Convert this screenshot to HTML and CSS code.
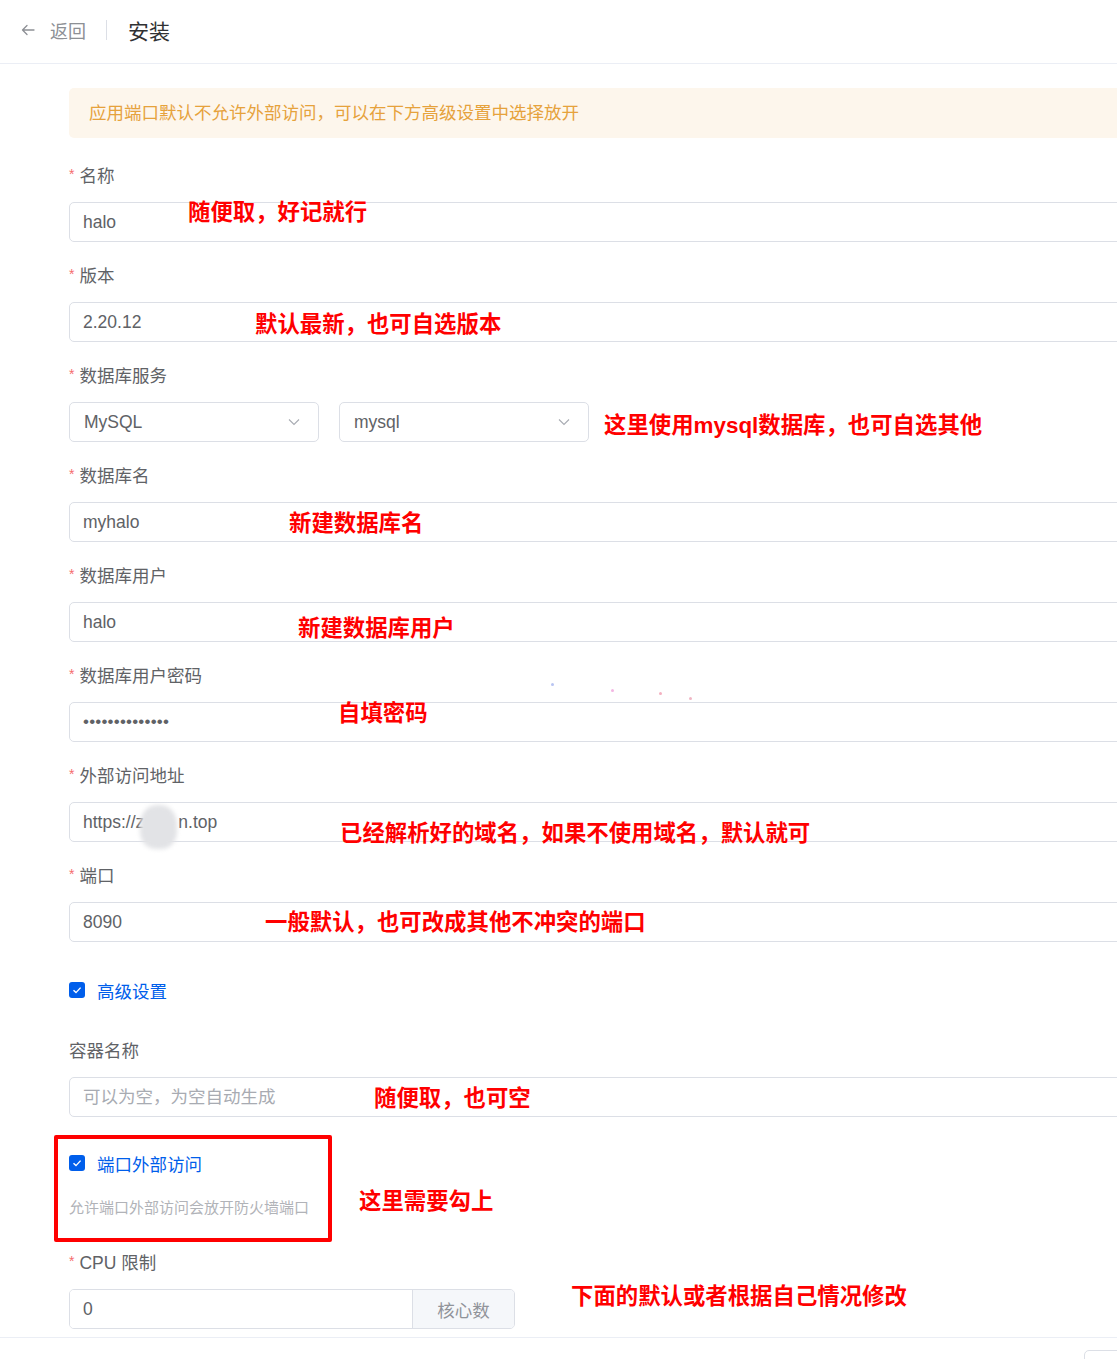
FILE: index.html
```html
<!DOCTYPE html>
<html lang="zh-CN">
<head>
    <meta charset="UTF-8">
    <meta name="viewport" content="width=device-width, initial-scale=1.0">
    <title>安装</title>
    <link rel="stylesheet" href="styles.css">
</head>
<body>

    <header class="page-header">
        <a class="back-link" href="#">
            <svg class="back-icon" viewBox="0 0 16 16" width="16" height="16">
                <path d="M14 8H2.5M7 3.5L2.5 8L7 12.5" fill="none" stroke="#8d9095" stroke-width="1.3" stroke-linecap="round" stroke-linejoin="round"/>
            </svg>
            <span>返回</span>
        </a>
        <span class="header-divider"></span>
        <span class="page-title">安装</span>
    </header>

    <main class="content">
        <div class="alert">应用端口默认不允许外部访问，可以在下方高级设置中选择放开</div>

        <form class="install-form">
            <div class="form-item">
                <label class="form-label required">名称</label>
                <input class="text-input" type="text" value="halo">
                <span class="note note-name">随便取，好记就行</span>
            </div>

            <div class="form-item">
                <label class="form-label required">版本</label>
                <input class="text-input" type="text" value="2.20.12">
                <span class="note note-version">默认最新，也可自选版本</span>
            </div>

            <div class="form-item">
                <label class="form-label required">数据库服务</label>
                <div class="select-row">
                    <div class="select-box">
                        <span>MySQL</span>
                        <svg viewBox="0 0 14 14" width="14" height="14"><path d="M2 4.5L7 9.5L12 4.5" fill="none" stroke="#a8abb2" stroke-width="1.1"/></svg>
                    </div>
                    <div class="select-box">
                        <span>mysql</span>
                        <svg viewBox="0 0 14 14" width="14" height="14"><path d="M2 4.5L7 9.5L12 4.5" fill="none" stroke="#a8abb2" stroke-width="1.1"/></svg>
                    </div>
                </div>
                <span class="note note-db">这里使用mysql数据库，也可自选其他</span>
            </div>

            <div class="form-item">
                <label class="form-label required">数据库名</label>
                <input class="text-input" type="text" value="myhalo">
                <span class="note note-dbname">新建数据库名</span>
            </div>

            <div class="form-item">
                <label class="form-label required">数据库用户</label>
                <input class="text-input" type="text" value="halo">
                <span class="note note-dbuser">新建数据库用户</span>
            </div>

            <div class="form-item">
                <label class="form-label required">数据库用户密码</label>
                <input class="text-input password" type="text" value="••••••••••••••">
                <span class="speck speck-1"></span>
                <span class="speck speck-2"></span>
                <span class="speck speck-3"></span>
                <span class="speck speck-4"></span>
                <span class="note note-pass">自填密码</span>
            </div>

            <div class="form-item">
                <label class="form-label required">外部访问地址</label>
                <div class="url-wrap">
                    <input class="text-input" type="text" value="https://z       n.top">
                    <span class="blur-mask"></span>
                </div>
                <span class="note note-url">已经解析好的域名，如果不使用域名，默认就可</span>
            </div>

            <div class="form-item">
                <label class="form-label required">端口</label>
                <input class="text-input" type="text" value="8090">
                <span class="note note-port">一般默认，也可改成其他不冲突的端口</span>
            </div>

            <div class="check-item advanced">
                <span class="check-box">
                    <svg viewBox="0 0 16 16" width="16" height="16"><path d="M4.5 8.2L7 10.6L11.6 5.6" fill="none" stroke="#fff" stroke-width="1.4"/></svg>
                </span>
                <span class="check-label">高级设置</span>
            </div>

            <div class="form-item">
                <label class="form-label">容器名称</label>
                <input class="text-input" type="text" placeholder="可以为空，为空自动生成">
                <span class="note note-container">随便取，也可空</span>
            </div>

            <div class="port-access">
                <div class="check-item">
                    <span class="check-box">
                        <svg viewBox="0 0 16 16" width="16" height="16"><path d="M4.5 8.2L7 10.6L11.6 5.6" fill="none" stroke="#fff" stroke-width="1.4"/></svg>
                    </span>
                    <span class="check-label">端口外部访问</span>
                </div>
                <p class="help-text">允许端口外部访问会放开防火墙端口</p>
                <span class="red-frame"></span>
                <span class="note note-check">这里需要勾上</span>
            </div>

            <div class="form-item last">
                <label class="form-label required">CPU 限制</label>
                <div class="input-group">
                    <input class="group-input" type="text" value="0">
                    <span class="group-append">核心数</span>
                </div>
                <span class="note note-cpu">下面的默认或者根据自己情况修改</span>
            </div>
        </form>
    </main>

    <footer class="page-footer">
        <button class="footer-btn" type="button"></button>
    </footer>

</body>
</html>
```

FILE: styles.css
```css
/* page base */
html, body {
    margin: 0;
    padding: 0;
    overflow: hidden;
}
body {
    font-family: "Liberation Sans", "Noto Sans CJK SC", sans-serif;
    background: #fff;
    color: #606266;
    width: 1117px;
    height: 1359px;
}

/* top bar */
.page-header {
    height: 64px;
    border-bottom: 1px solid #ebeef5;
    display: flex;
    align-items: center;
    padding-left: 20px;
    box-sizing: border-box;
    padding-bottom: 4px;
}
.back-link {
    display: flex;
    align-items: center;
    gap: 14px;
    color: #8d9095;
    font-size: 18px;
    text-decoration: none;
}
.header-divider {
    width: 1px;
    height: 20px;
    background: #dcdfe6;
    margin: 0 21px 0 20px;
}
.page-title {
    font-size: 21px;
    color: #303133;
}

/* body content */
.content {
    padding: 24px 0 0 69px;
    width: 1100px;
}
.alert {
    height: 50px;
    line-height: 50px;
    padding-left: 20px;
    background: #fdf6ec;
    color: #e6a23c;
    font-size: 17.5px;
    border-radius: 5px;
}
.install-form {
    margin-top: 25px;
    display: flex;
    flex-direction: column;
}
.form-item {
    position: relative;
    margin-bottom: 21px;
}
.form-item.last {
    margin-bottom: 0;
}
.form-label {
    display: block;
    height: 26px;
    line-height: 26px;
    font-size: 17.5px;
    color: #606266;
    margin-bottom: 13px;
}
.form-label.required::before {
    content: "*";
    color: #f56c6c;
    font-size: 14px;
    margin-right: 5px;
    position: relative;
    top: -3px;
}
.text-input {
    display: block;
    width: 100%;
    height: 40px;
    box-sizing: border-box;
    border: 1px solid #dcdfe6;
    border-radius: 5px;
    padding: 0 13px;
    font-family: inherit;
    font-size: 17.5px;
    color: #606266;
    outline: none;
    background: #fff;
}
.text-input::placeholder {
    color: #a8abb2;
}
.text-input.password {
    font-size: 17px;
    letter-spacing: 0.2px;
}

/* selects */
.select-row {
    display: flex;
    gap: 20px;
}
.select-box {
    width: 250px;
    height: 40px;
    box-sizing: border-box;
    border: 1px solid #dcdfe6;
    border-radius: 5px;
    padding: 0 17px 0 14px;
    display: flex;
    align-items: center;
    justify-content: space-between;
    font-size: 17.5px;
}

/* masked url */
.url-wrap {
    position: relative;
}
.blur-mask {
    position: absolute;
    left: 71px;
    top: 3px;
    width: 37px;
    height: 44px;
    background: #e2e3e6;
    border-radius: 45% 45% 40% 40%;
    filter: blur(2px);
}
.speck {
    position: absolute;
    width: 3px;
    height: 3px;
    border-radius: 50%;
}
.speck-1 { left: 482px; top: 20px; background: #b8c4f2; }
.speck-2 { left: 542px; top: 26px; background: #f3b6e3; }
.speck-3 { left: 590px; top: 29px; background: #f4b0c0; }
.speck-4 { left: 620px; top: 34px; background: #f0b6c4; }

/* checkboxes */
.check-item {
    display: flex;
    align-items: center;
    gap: 12px;
    height: 26px;
}
.check-item.advanced {
    margin: 14px 0 35px;
}
.check-box {
    width: 16px;
    height: 16px;
    border-radius: 3px;
    background: #005eeb;
    display: flex;
}
.check-label {
    color: #005eeb;
    font-size: 17.5px;
}
.port-access {
    position: relative;
    margin-top: 12px;
    margin-bottom: 32px;
}
.help-text {
    margin: 22px 0 0;
    font-size: 15px;
    line-height: 20px;
    color: #b1b3b8;
}

/* cpu group */
.input-group {
    display: flex;
    width: 446px;
    height: 40px;
    border: 1px solid #dcdfe6;
    border-radius: 5px;
    box-sizing: border-box;
    overflow: hidden;
}
.group-input {
    flex: 1;
    border: none;
    outline: none;
    padding: 0 13px;
    font-family: inherit;
    font-size: 17.5px;
    color: #606266;
}
.group-append {
    width: 101px;
    border-left: 1px solid #dcdfe6;
    background: #f5f7fa;
    color: #909399;
    font-size: 17.5px;
    display: flex;
    align-items: center;
    justify-content: center;
}

/* red annotations */
.note {
    position: absolute;
    color: #ff0000;
    font-weight: bold;
    font-size: 22.4px;
    line-height: 30px;
    white-space: nowrap;
}
.note-name { left: 119px; top: 35px; }
.note-version { left: 186px; top: 47px; }
.note-db { left: 535px; top: 48px; }
.note-dbname { left: 220px; top: 46px; }
.note-dbuser { left: 229px; top: 51px; }
.note-pass { left: 269px; top: 36px; }
.note-url { left: 271px; top: 56px; }
.note-port { left: 196px; top: 45px; }
.note-container { left: 305px; top: 46px; }
.note-check { left: 290px; top: 37px; }
.note-cpu { left: 502px; top: 32px; }
.red-frame {
    position: absolute;
    left: -15px;
    top: -15px;
    width: 278px;
    height: 107px;
    box-sizing: border-box;
    border: 4px solid #ff0000;
    border-radius: 2px;
}

/* bottom bar */
.page-footer {
    border-top: 1px solid #ebeef5;
    margin-top: 8px;
    height: 60px;
    position: relative;
}
.footer-btn {
    position: absolute;
    left: 1084px;
    top: 12px;
    width: 80px;
    height: 36px;
    border: 1px solid #dcdfe6;
    border-radius: 5px;
    background: #fff;
}
```
